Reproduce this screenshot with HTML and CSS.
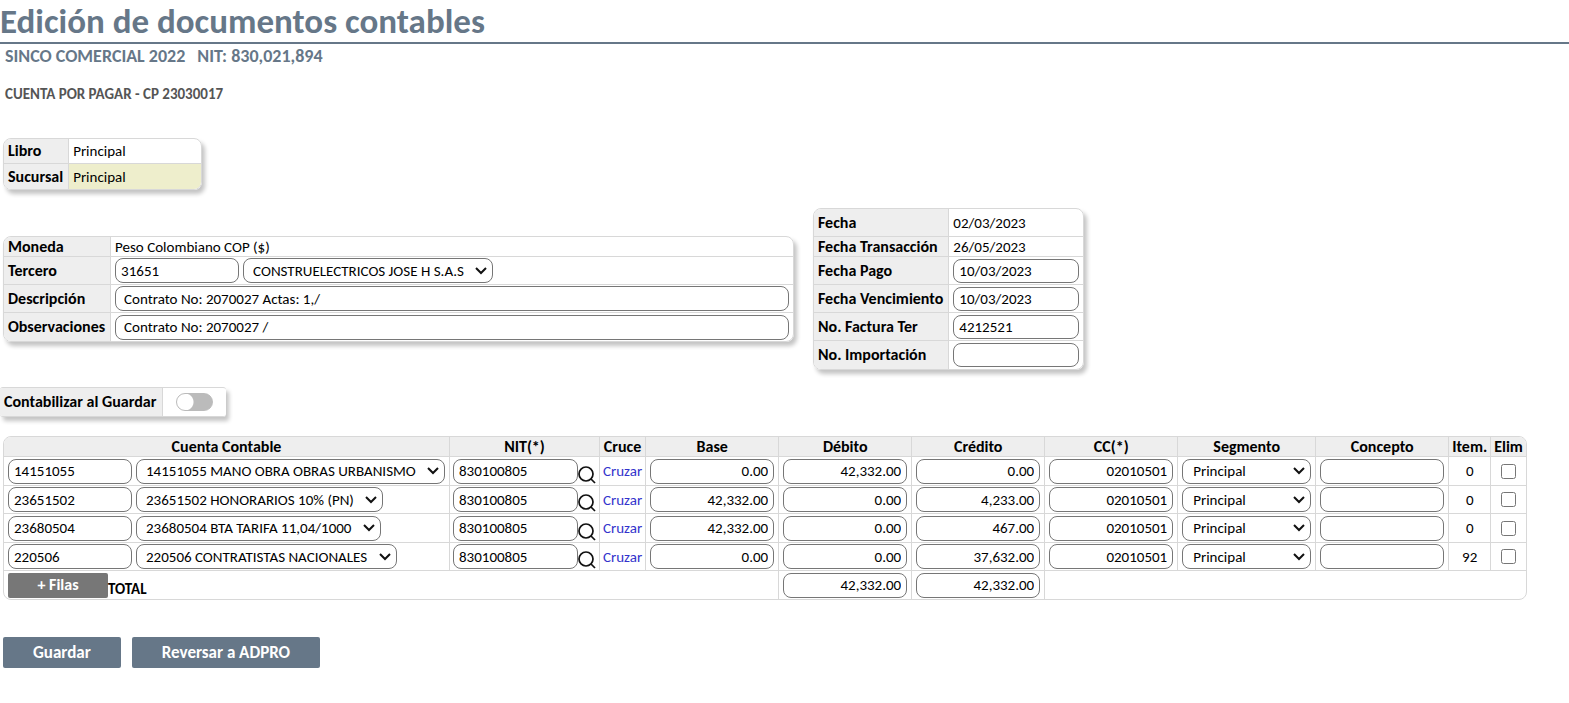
FILE: index.html
```html
<!DOCTYPE html>
<html lang="es">
<head>
<meta charset="utf-8">
<title>Edición de documentos contables</title>
<link rel="stylesheet" href="styles.css">
</head>
<body>
<svg class="symbols" aria-hidden="true">
  <symbol id="search" viewBox="0 0 18 18">
    <circle cx="8" cy="8" r="7"/>
    <path d="M13 13l4 4"/>
  </symbol>
</svg>
<header class="page-header">
  <h1 class="page-title">Edición de documentos contables</h1>
</header>
<main>
  <p class="company"><span>SINCO COMERCIAL 2022</span><span>NIT: 830,021,894</span></p>
  <h2 class="doc-title">CUENTA POR PAGAR - CP 23030017</h2>

  <table class="panel book">
    <tr><th scope="row">Libro</th><td>Principal</td></tr>
    <tr><th scope="row">Sucursal</th><td class="marked">Principal</td></tr>
  </table>

  <section class="details">
    <table class="panel info">
      <tr class="short"><th scope="row">Moneda</th><td>Peso Colombiano COP ($)</td></tr>
      <tr>
        <th scope="row"><label for="tercero">Tercero</label></th>
        <td><div class="pair"><input class="field" id="tercero" value="31651"><select class="field" aria-label="Nombre del tercero"><option>CONSTRUELECTRICOS JOSE H S.A.S</option></select></div></td>
      </tr>
      <tr>
        <th scope="row"><label for="descripcion">Descripción</label></th>
        <td><input class="field wide" id="descripcion" value="Contrato No: 2070027 Actas: 1,/"></td>
      </tr>
      <tr>
        <th scope="row"><label for="observaciones">Observaciones</label></th>
        <td><input class="field wide" id="observaciones" value="Contrato No: 2070027 /"></td>
      </tr>
    </table>
    <table class="panel dates">
      <tr><th scope="row">Fecha</th><td>02/03/2023</td></tr>
      <tr class="short"><th scope="row">Fecha Transacción</th><td>26/05/2023</td></tr>
      <tr><th scope="row"><label for="pago">Fecha Pago</label></th><td><input class="field" id="pago" value="10/03/2023"></td></tr>
      <tr><th scope="row"><label for="venc">Fecha Vencimiento</label></th><td><input class="field" id="venc" value="10/03/2023"></td></tr>
      <tr><th scope="row"><label for="factura">No. Factura Ter</label></th><td><input class="field" id="factura" value="4212521"></td></tr>
      <tr><th scope="row"><label for="importacion">No. Importación</label></th><td><input class="field" id="importacion"></td></tr>
    </table>
  </section>

  <table class="panel post">
    <tr><th scope="row"><label for="contabilizar">Contabilizar al Guardar</label></th><td><input class="switch" type="checkbox" role="switch" id="contabilizar"></td></tr>
  </table>

  <table class="panel ledger">
    <thead>
      <tr><th>Cuenta Contable</th><th>NIT(*)</th><th>Cruce</th><th>Base</th><th>Débito</th><th>Crédito</th><th>CC(*)</th><th>Segmento</th><th>Concepto</th><th>Item.</th><th>Elim</th></tr>
    </thead>
    <tbody>
      <tr>
        <td><div class="pair"><input class="field" aria-label="Cuenta" value="14151055"><select class="field" aria-label="Cuenta contable"><option>14151055 MANO OBRA OBRAS URBANISMO</option></select></div></td>
        <td class="tight"><div class="lookup"><input class="field" aria-label="NIT" value="830100805"><button type="button" class="find" aria-label="Buscar"><svg><use href="#search"/></svg></button></div></td>
        <td class="tight"><a href="#">Cruzar</a></td>
        <td><input class="field num" aria-label="Base" value="0.00"></td>
        <td><input class="field num" aria-label="Débito" value="42,332.00"></td>
        <td><input class="field num" aria-label="Crédito" value="0.00"></td>
        <td><input class="field num" aria-label="CC" value="02010501"></td>
        <td><select class="field segment" aria-label="Segmento"><option>Principal</option></select></td>
        <td><input class="field" aria-label="Concepto"></td>
        <td class="center">0</td>
        <td class="center"><input type="checkbox" class="check" aria-label="Eliminar"></td>
      </tr>
      <tr>
        <td><div class="pair"><input class="field" aria-label="Cuenta" value="23651502"><select class="field" aria-label="Cuenta contable"><option>23651502 HONORARIOS 10% (PN)</option></select></div></td>
        <td class="tight"><div class="lookup"><input class="field" aria-label="NIT" value="830100805"><button type="button" class="find" aria-label="Buscar"><svg><use href="#search"/></svg></button></div></td>
        <td class="tight"><a href="#">Cruzar</a></td>
        <td><input class="field num" aria-label="Base" value="42,332.00"></td>
        <td><input class="field num" aria-label="Débito" value="0.00"></td>
        <td><input class="field num" aria-label="Crédito" value="4,233.00"></td>
        <td><input class="field num" aria-label="CC" value="02010501"></td>
        <td><select class="field segment" aria-label="Segmento"><option>Principal</option></select></td>
        <td><input class="field" aria-label="Concepto"></td>
        <td class="center">0</td>
        <td class="center"><input type="checkbox" class="check" aria-label="Eliminar"></td>
      </tr>
      <tr>
        <td><div class="pair"><input class="field" aria-label="Cuenta" value="23680504"><select class="field" aria-label="Cuenta contable"><option>23680504 BTA TARIFA 11,04/1000</option></select></div></td>
        <td class="tight"><div class="lookup"><input class="field" aria-label="NIT" value="830100805"><button type="button" class="find" aria-label="Buscar"><svg><use href="#search"/></svg></button></div></td>
        <td class="tight"><a href="#">Cruzar</a></td>
        <td><input class="field num" aria-label="Base" value="42,332.00"></td>
        <td><input class="field num" aria-label="Débito" value="0.00"></td>
        <td><input class="field num" aria-label="Crédito" value="467.00"></td>
        <td><input class="field num" aria-label="CC" value="02010501"></td>
        <td><select class="field segment" aria-label="Segmento"><option>Principal</option></select></td>
        <td><input class="field" aria-label="Concepto"></td>
        <td class="center">0</td>
        <td class="center"><input type="checkbox" class="check" aria-label="Eliminar"></td>
      </tr>
      <tr>
        <td><div class="pair"><input class="field" aria-label="Cuenta" value="220506"><select class="field" aria-label="Cuenta contable"><option>220506 CONTRATISTAS NACIONALES</option></select></div></td>
        <td class="tight"><div class="lookup"><input class="field" aria-label="NIT" value="830100805"><button type="button" class="find" aria-label="Buscar"><svg><use href="#search"/></svg></button></div></td>
        <td class="tight"><a href="#">Cruzar</a></td>
        <td><input class="field num" aria-label="Base" value="0.00"></td>
        <td><input class="field num" aria-label="Débito" value="0.00"></td>
        <td><input class="field num" aria-label="Crédito" value="37,632.00"></td>
        <td><input class="field num" aria-label="CC" value="02010501"></td>
        <td><select class="field segment" aria-label="Segmento"><option>Principal</option></select></td>
        <td><input class="field" aria-label="Concepto"></td>
        <td class="center">92</td>
        <td class="center"><input type="checkbox" class="check" aria-label="Eliminar"></td>
      </tr>
    </tbody>
    <tfoot>
      <tr>
        <td colspan="4"><div class="total"><button type="button" class="add-rows">+ Filas</button><strong>TOTAL</strong></div></td>
        <td><input class="field num" aria-label="Total débito" value="42,332.00"></td>
        <td><input class="field num" aria-label="Total crédito" value="42,332.00"></td>
        <td colspan="5"></td>
      </tr>
    </tfoot>
  </table>

  <div class="actions">
    <button type="button" class="action">Guardar</button>
    <button type="button" class="action">Reversar a ADPRO</button>
  </div>
</main>
</body>
</html>
```
FILE: styles.css
```css
* { box-sizing: border-box; }

body {
  margin: 0;
  background: #fff;
  color: #000;
  font: 15px/18px Carlito, Calibri, "Open Sans", sans-serif;
}

.symbols { display: none; }

.page-header { border-bottom: 2px solid #678; }

.page-title {
  margin: 0;
  color: #678;
  font-size: 35px;
  line-height: 42px;
}

.company {
  display: flex;
  gap: 12px;
  margin: 0;
  padding: 2px 5px 0;
  color: #678;
  font-size: 18px;
  line-height: 20px;
  font-weight: 700;
}

.doc-title {
  margin: 19px 5px 0;
  color: #555;
  font-size: 15px;
  line-height: 18px;
}

.panel {
  border: 1px solid #d8d8d8;
  border-radius: 8px;
  border-spacing: 0;
  box-shadow: 3px 4px 4px #c4c4c4;
  overflow: hidden;
}

.panel th,
.panel td {
  height: 28px;
  padding: 0 4px;
  border-bottom: 1px solid #d8d8d8;
  border-left: 1px solid #d8d8d8;
  white-space: nowrap;
}

.panel th {
  padding-right: 5px;
  background: #eee;
  font-size: 16px;
  text-align: left;
}

.panel tr > :first-child { border-left: 0; }
.panel > :last-child > tr:last-child > * { border-bottom: 0; }

.book { margin: 35px 0 0 3px; }
.book th, .book td { height: 25px; }
.book td { min-width: 133px; }
.book .marked { background: #eec; }

.details {
  display: flex;
  align-items: center;
  gap: 19px;
  margin: 18px 3px 0;
}

.panel .short > * { height: 20px; }

.info { width: 791px; }
.info td { width: 100%; }

.post {
  margin: 17px 0 0;
  border-left: 0;
  border-right: 0;
  border-radius: 3px;
}
.panel.post th { padding-right: 6px; }
.post td { padding: 0 13px; }

.field {
  width: 126px;
  height: 25px;
  margin: 0;
  padding: 0 5px;
  border: 1px solid #767676;
  border-radius: 8px;
  background: #fff;
  color: #000;
  font: inherit;
  vertical-align: middle;
}

.info .field, .dates .field { display: block; }
.dates .field { height: 24px; }

select.field {
  appearance: none;
  background: #fff url("data:image/svg+xml,%3Csvg xmlns='http://www.w3.org/2000/svg' width='12' height='8' fill='none' stroke='%23111' stroke-width='2'%3E%3Cpath d='M1 1l5 5 5-5'/%3E%3C/svg%3E") no-repeat right 5px center;
}

.pair, .lookup, .total { display: flex; }
.pair { gap: 4px; }
.pair .field { width: 124px; }
.pair select.field { width: auto; padding: 0 28px 0 9px; }
.field.wide { width: 100%; padding: 0 8px; }
.field.num { text-align: right; }

.switch {
  appearance: none;
  display: block;
  width: 37px;
  height: 18px;
  margin: 0;
  border: 1px solid #bbb;
  border-radius: 9px;
  background: radial-gradient(circle at 8px 8px, #fff 8px, #bbb 9px);
}

.ledger {
  margin: 19px 0 0 3px;
  box-shadow: none;
}
.ledger .field { width: 124px; }
.ledger .lookup .field { width: 125px; }
.ledger .pair select.field { width: auto; }
.ledger .field.segment { width: 129px; padding: 0 10px; }
.ledger thead th {
  height: 20px;
  padding: 0 3px;
  text-align: center;
}
.ledger tbody tr:nth-child(odd) td { height: 29px; }
.ledger .center { text-align: center; }
.ledger .tight { padding: 0 3px; }
.ledger a { color: #33c; text-decoration: none; }

.lookup { align-items: flex-end; }
.find {
  width: 18px;
  height: 22px;
  margin: 0;
  padding: 4px 0 0;
  border: 0;
  background: none;
}
.find svg {
  display: block;
  width: 18px;
  height: 18px;
  fill: none;
  stroke: #111;
  stroke-width: 1.7;
}

.check {
  display: block;
  width: 15px;
  height: 15px;
  margin: 0 auto;
}

.add-rows {
  width: 100px;
  height: 25px;
  padding: 0;
  border: 0;
  border-radius: 2px;
  background: #777;
  color: #fff;
  font: 700 16px/18px Carlito, Calibri, "Open Sans", sans-serif;
}
.total { align-items: flex-end; }

.actions {
  display: flex;
  gap: 11px;
  margin: 37px 3px 0;
}
.action {
  height: 31px;
  padding: 0 30px;
  border: 0;
  border-radius: 2px;
  background: #678;
  color: #fff;
  font: 700 17px/20px Carlito, Calibri, "Open Sans", sans-serif;
}
```
